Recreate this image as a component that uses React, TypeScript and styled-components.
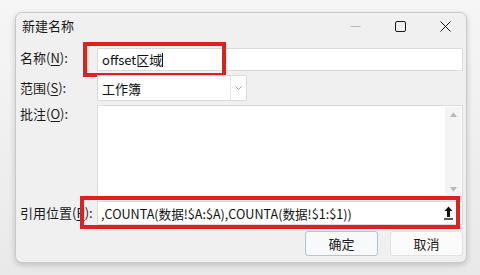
import React from 'react';
import styled, { createGlobalStyle } from 'styled-components';

const GlobalStyle = createGlobalStyle`
    html, body {
        margin: 0;
        padding: 0;
        width: 480px;
        height: 275px;
        overflow: hidden;
        font-family: "Noto Sans CJK SC", "Noto Sans", sans-serif;
    }
`;

export default function App(): React.ReactElement {
    return (
        <Page>
            <GlobalStyle />
            <Dialog>
                <TitleBar>
                    <Title>新建名称</Title>
                    <WindowButtons>
                        <WinButton>
                            <svg width="11" height="11" viewBox="0 0 11 11">
                                <path d="M0.5 5.5h10" stroke="#b8b8b8" strokeWidth="1" />
                            </svg>
                        </WinButton>
                        <WinButton>
                            <svg width="11" height="11" viewBox="0 0 11 11">
                                <rect x="0.5" y="0.5" width="10" height="10" rx="1.5" fill="none" stroke="#1a1a1a" strokeWidth="1" />
                            </svg>
                        </WinButton>
                        <WinButton>
                            <svg width="11" height="11" viewBox="0 0 11 11">
                                <path d="M0.5 0.5l10 10M10.5 0.5l-10 10" stroke="#1a1a1a" strokeWidth="1" />
                            </svg>
                        </WinButton>
                    </WindowButtons>
                </TitleBar>

                <Form>
                    <Label>名称(<u>N</u>):</Label>
                    <Field>
                        <TextInput>offset区域<Caret /></TextInput>
                        <Highlight $left={-14} $top={-6} $width={143} $height={35} />
                    </Field>

                    <Label $top={4}>范围(<u>S</u>):</Label>
                    <Field>
                        <Select>
                            <SelectValue>工作簿</SelectValue>
                            <SelectArrow>
                                <svg width="7" height="4" viewBox="0 0 7 4">
                                    <path d="M0.5 0.5l3 3 3-3" fill="none" stroke="#9a9a9a" strokeWidth="0.9" />
                                </svg>
                            </SelectArrow>
                        </Select>
                    </Field>

                    <Label $top={0}>批注(<u>O</u>):</Label>
                    <Field>
                        <TextArea>
                            <ScrollBar>
                                <svg width="7" height="5" viewBox="0 0 7 5"><path d="M0 5L3.5 0.5 7 5z" fill="#b5b5b5" /></svg>
                                <svg width="7" height="5" viewBox="0 0 7 5"><path d="M0 0L3.5 4.5 7 0z" fill="#b5b5b5" /></svg>
                            </ScrollBar>
                        </TextArea>
                    </Field>

                    <Label $top={3}>引用位置(<u>R</u>):</Label>
                    <Field>
                        <RefInput>
                            <RefText>,COUNTA(数据!$A:$A),COUNTA(数据!$1:$1))</RefText>
                            <CollapseButton>
                                <svg width="9" height="14" viewBox="0 0 9 14">
                                    <path d="M4.5 0.5L8.5 5H6V11H3V5H0.5z" fill="#111" />
                                    <path d="M0 13h9" stroke="#111" strokeWidth="1.4" />
                                </svg>
                            </CollapseButton>
                        </RefInput>
                        <Highlight $left={-17} $top={-5} $width={380} $height={33} />
                    </Field>
                </Form>

                <Footer>
                    <Button $primary>确定</Button>
                    <Button>取消</Button>
                </Footer>
            </Dialog>
        </Page>
    );
}

const Page = styled.div`
    width: 480px;
    height: 275px;
    box-sizing: border-box;
    padding: 12px 13px 12px 15px;
    background: linear-gradient(180deg, #f6f6f6 0%, #e9e9e9 100%);
`;

const Dialog = styled.div`
    width: 452px;
    height: 251px;
    box-sizing: border-box;
    background: #f0f0f0;
    border: 1px solid #c9c9c9;
    border-radius: 7px;
    box-shadow: 0 2px 6px rgba(0, 0, 0, 0.18);
    display: flex;
    flex-direction: column;
`;

const TitleBar = styled.div`
    height: 27px;
    display: flex;
    align-items: center;
    justify-content: space-between;
    padding: 0 15px 0 6px;
`;

const Title = styled.div`
    font-size: 13px;
    color: #1a1a1a;
    margin-top: -2px;
`;

const WindowButtons = styled.div`
    display: flex;
    gap: 34px;
    align-items: center;
`;

const WinButton = styled.div`
    width: 11px;
    height: 11px;
    display: flex;
`;

const Form = styled.div`
    display: grid;
    grid-template-columns: 81px 366px;
    grid-template-rows: 23px 26px 92px 24px;
    row-gap: 4px;
    margin-top: 8px;
`;

const Label = styled.div<{ $top?: number }>`
    font-size: 13px;
    color: #1a1a1a;
    padding-left: 4px;
    padding-top: ${({ $top }) => $top ?? 1}px;
    line-height: 18px;
    white-space: nowrap;
    & u {
        text-underline-offset: 2px;
    }
`;

const Field = styled.div`
    position: relative;
`;

const Box = styled.div`
    box-sizing: border-box;
    height: 100%;
    background: #ffffff;
    border: 1px solid #dadada;
`;

const TextInput = styled(Box)`
    font-size: 13px;
    color: #111;
    padding-left: 4px;
    display: flex;
    align-items: center;
`;

const Caret = styled.span`
    display: inline-block;
    width: 1px;
    height: 14px;
    background: #111;
`;

const Select = styled(Box)`
    width: 150px;
    display: flex;
    align-items: stretch;
`;

const SelectValue = styled.div`
    flex: 1;
    font-size: 13px;
    color: #111;
    padding-left: 4px;
    display: flex;
    align-items: center;
`;

const SelectArrow = styled.div`
    width: 15px;
    border-left: 1px solid #e6e6e6;
    display: flex;
    align-items: center;
    justify-content: center;
`;

const TextArea = styled(Box)`
    display: flex;
    justify-content: flex-end;
    padding: 1px;
`;

const ScrollBar = styled.div`
    width: 16px;
    background: #f4f4f4;
    display: flex;
    flex-direction: column;
    align-items: center;
    justify-content: space-between;
    padding: 5px 0 3px;
`;

const RefInput = styled(Box)`
    display: flex;
    align-items: center;
`;

const RefText = styled.div`
    flex: 1;
    font-size: 12.6px;
    color: #111;
    padding-left: 3px;
    white-space: nowrap;
    overflow: hidden;
`;

const CollapseButton = styled.div`
    width: 16px;
    margin-right: 6px;
    display: flex;
    justify-content: center;
    align-items: center;
`;

const Highlight = styled.div<{ $left: number; $top: number; $width: number; $height: number }>`
    position: absolute;
    left: ${({ $left }) => $left}px;
    top: ${({ $top }) => $top}px;
    width: ${({ $width }) => $width}px;
    height: ${({ $height }) => $height}px;
    box-sizing: border-box;
    border: 4px solid #e0201c;
    pointer-events: none;
`;

const Footer = styled.div`
    display: flex;
    justify-content: flex-end;
    gap: 12px;
    padding: 6px 3px 0 0;
`;

const Button = styled.div<{ $primary?: boolean }>`
    width: 73px;
    height: 25px;
    box-sizing: border-box;
    display: flex;
    align-items: center;
    justify-content: center;
    font-size: 13px;
    color: #1a1a1a;
    background: ${({ $primary }) => ($primary ? '#f7f9fb' : '#fbfbfb')};
    border: 1px solid ${({ $primary }) => ($primary ? '#a9c6de' : '#e2e2e2')};
    border-radius: 3px;
`;
